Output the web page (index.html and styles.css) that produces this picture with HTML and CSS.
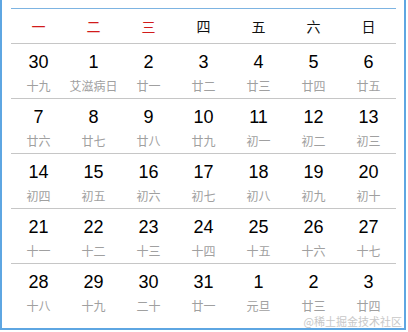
FILE: index.html
```html
<!DOCTYPE html>
<html lang="zh">
<head>
<meta charset="utf-8">
<link rel="stylesheet" href="styles.css">
</head>
<body>
<div class="frame">
  <div class="calendar">
    <div class="week">
      <div class="wd red">一</div><div class="wd red">二</div><div class="wd red">三</div><div class="wd">四</div><div class="wd">五</div><div class="wd">六</div><div class="wd">日</div>
    </div>
    <div class="row">
      <div class="day"><span class="num">30</span><span class="lunar">十九</span></div>
      <div class="day"><span class="num">1</span><span class="lunar">艾滋病日</span></div>
      <div class="day"><span class="num">2</span><span class="lunar">廿一</span></div>
      <div class="day"><span class="num">3</span><span class="lunar">廿二</span></div>
      <div class="day"><span class="num">4</span><span class="lunar">廿三</span></div>
      <div class="day"><span class="num">5</span><span class="lunar">廿四</span></div>
      <div class="day"><span class="num">6</span><span class="lunar">廿五</span></div>
    </div>
    <div class="row">
      <div class="day"><span class="num">7</span><span class="lunar">廿六</span></div>
      <div class="day"><span class="num">8</span><span class="lunar">廿七</span></div>
      <div class="day"><span class="num">9</span><span class="lunar">廿八</span></div>
      <div class="day"><span class="num">10</span><span class="lunar">廿九</span></div>
      <div class="day"><span class="num">11</span><span class="lunar">初一</span></div>
      <div class="day"><span class="num">12</span><span class="lunar">初二</span></div>
      <div class="day"><span class="num">13</span><span class="lunar">初三</span></div>
    </div>
    <div class="row">
      <div class="day"><span class="num">14</span><span class="lunar">初四</span></div>
      <div class="day"><span class="num">15</span><span class="lunar">初五</span></div>
      <div class="day"><span class="num">16</span><span class="lunar">初六</span></div>
      <div class="day"><span class="num">17</span><span class="lunar">初七</span></div>
      <div class="day"><span class="num">18</span><span class="lunar">初八</span></div>
      <div class="day"><span class="num">19</span><span class="lunar">初九</span></div>
      <div class="day"><span class="num">20</span><span class="lunar">初十</span></div>
    </div>
    <div class="row">
      <div class="day"><span class="num">21</span><span class="lunar">十一</span></div>
      <div class="day"><span class="num">22</span><span class="lunar">十二</span></div>
      <div class="day"><span class="num">23</span><span class="lunar">十三</span></div>
      <div class="day"><span class="num">24</span><span class="lunar">十四</span></div>
      <div class="day"><span class="num">25</span><span class="lunar">十五</span></div>
      <div class="day"><span class="num">26</span><span class="lunar">十六</span></div>
      <div class="day"><span class="num">27</span><span class="lunar">十七</span></div>
    </div>
    <div class="row last">
      <div class="day"><span class="num">28</span><span class="lunar">十八</span></div>
      <div class="day"><span class="num">29</span><span class="lunar">十九</span></div>
      <div class="day"><span class="num">30</span><span class="lunar">二十</span></div>
      <div class="day"><span class="num">31</span><span class="lunar">廿一</span></div>
      <div class="day"><span class="num">1</span><span class="lunar">元旦</span></div>
      <div class="day"><span class="num">2</span><span class="lunar">廿三</span></div>
      <div class="day"><span class="num">3</span><span class="lunar">廿四</span></div>
    </div>
  </div>
  <div class="mark">@稀土掘金技术社区</div>
</div>
</body>
</html>
```

FILE: styles.css
```css
html, body {
  margin: 0;
  padding: 0;
  background: #fff;
}
body {
  font-family: "Liberation Sans", Arial, "Noto Sans CJK SC", sans-serif;
}
.frame {
  position: relative;
  box-sizing: border-box;
  width: 406px;
  height: 330px;
  padding: 8px 0 0 9px;
  border-left: 2px solid #5ea6e2;
  border-right: 2px solid #5ea6e2;
  border-bottom: 2px solid #5ea6e2;
}
.calendar {
  width: 385px;
  border-top: 1px solid #7db4e2;
}
.week, .row {
  display: grid;
  grid-template-columns: repeat(7, 55px);
}
.week {
  height: 34px;
  border-bottom: 1px solid #c6c6c6;
  align-items: center;
}
.wd {
  text-align: center;
  font-size: 14px;
  color: #111;
  font-family: "Noto Sans CJK SC", sans-serif;
}
.wd.red {
  color: #d11b1b;
}
.row {
  height: 54px;
  border-bottom: 1px solid #c6c6c6;
}
.row.last {
  border-bottom: none;
}
.day {
  display: flex;
  flex-direction: column;
  align-items: center;
  padding-top: 7px;
}
.num {
  font-size: 18px;
  line-height: 22px;
  color: #000;
}
.lunar {
  margin-top: 5px;
  font-size: 12px;
  line-height: 16px;
  color: #a0a0a0;
  font-family: "Noto Sans CJK SC", sans-serif;
}
.mark {
  position: absolute;
  right: 2px;
  bottom: 0;
  font-size: 11px;
  color: #c8c8c8;
  font-family: "Noto Sans CJK SC", sans-serif;
  line-height: 14px;
}
```
